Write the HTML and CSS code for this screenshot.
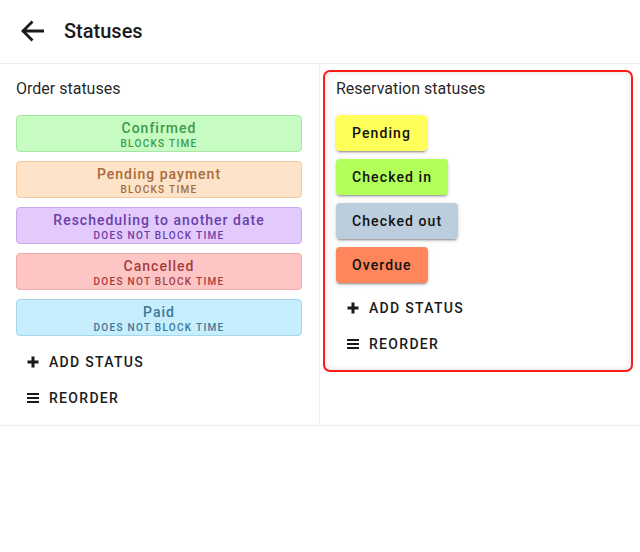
FILE: index.html
```html
<!DOCTYPE html>
<html>
<head>
<meta charset="utf-8">
<link rel="stylesheet" href="styles.css">
</head>
<body>
<header class="topbar">
  <button class="back" aria-label="Back">
    <svg width="24" height="22" viewBox="0 0 24 22"><path d="M23 11H3.5M11.5 2.5L3 11l8.5 8.5" fill="none" stroke="#1a1a1a" stroke-width="2.8" stroke-linecap="square" stroke-linejoin="miter"/></svg>
  </button>
  <h1 class="title">Statuses</h1>
</header>
<main class="columns">
  <section class="col col-left">
    <h2 class="col-title">Order statuses</h2>
    <div class="chips">
      <div class="chip chip-green"><div class="chip-name">Confirmed</div><div class="chip-sub">Blocks time</div></div>
      <div class="chip chip-orange"><div class="chip-name">Pending payment</div><div class="chip-sub">Blocks time</div></div>
      <div class="chip chip-purple"><div class="chip-name">Rescheduling to another date</div><div class="chip-sub">Does not block time</div></div>
      <div class="chip chip-red"><div class="chip-name">Cancelled</div><div class="chip-sub">Does not block time</div></div>
      <div class="chip chip-blue"><div class="chip-name">Paid</div><div class="chip-sub">Does not block time</div></div>
    </div>
    <div class="actions">
      <button class="action"><svg class="ico" viewBox="0 0 12 12"><path d="M6 0.5v11M0.5 6h11" stroke="#1a1a1a" stroke-width="3" fill="none"/></svg>Add status</button>
      <button class="action"><svg class="ico" viewBox="0 0 12 12"><path d="M0 2h12M0 6h12M0 10h12" stroke="#1a1a1a" stroke-width="2" fill="none"/></svg>Reorder</button>
    </div>
  </section>
  <section class="col col-right">
    <div class="card">
      <h2 class="col-title">Reservation statuses</h2>
      <div class="pills">
        <button class="pill pill-yellow">Pending</button>
        <button class="pill pill-lime">Checked in</button>
        <button class="pill pill-grey">Checked out</button>
        <button class="pill pill-coral">Overdue</button>
      </div>
      <div class="actions actions-right">
        <button class="action"><svg class="ico" viewBox="0 0 12 12"><path d="M6 0.5v11M0.5 6h11" stroke="#1a1a1a" stroke-width="3" fill="none"/></svg>Add status</button>
        <button class="action"><svg class="ico" viewBox="0 0 12 12"><path d="M0 2h12M0 6h12M0 10h12" stroke="#1a1a1a" stroke-width="2" fill="none"/></svg>Reorder</button>
      </div>
    </div>
  </section>
</main>
</body>
</html>
```
FILE: styles.css
```css
* { box-sizing: border-box; }
html, body { margin: 0; padding: 0; background: #fff; }
body {
  font-family: Roboto, "Liberation Sans", Arial, sans-serif;
  color: rgba(0,0,0,0.87);
  width: 640px;
}
button { font-family: inherit; border: 0; background: none; padding: 0; cursor: pointer; }

.topbar {
  height: 64px;
  display: flex;
  align-items: center;
  border-bottom: 1px solid #eeeeee;
}
.back {
  width: 24px;
  height: 22px;
  margin-left: 20px;
  margin-top: -2px;
  display: flex;
}
.title {
  margin: 0 0 0 20px;
  font-size: 20px;
  font-weight: 500;
  color: #1a1a1a;
  line-height: 24px;
  margin-top: -2px;
}

.columns {
  display: grid;
  grid-template-columns: 320px 320px;
  border-bottom: 1px solid #eeeeee;
}
.col-left {
  border-right: 1px solid #eeeeee;
  padding: 13px 17px 9px 16px;
}
.col-right {
  padding: 6px 7px 0 3px;
}
.col-title {
  margin: 0 0 14px;
  font-size: 16px;
  font-weight: 400;
  line-height: 24px;
  color: rgba(0,0,0,0.87);
}

.chips { display: flex; flex-direction: column; gap: 9px; }
.chip {
  height: 37px;
  border-radius: 4px;
  border: 1px solid;
  padding: 4px 8px 0;
  text-align: center;
}
.chip-name {
  font-size: 14px;
  font-weight: 500;
  line-height: 16px;
  letter-spacing: 1px;
}
.chip-sub {
  font-size: 10px;
  font-weight: 500;
  line-height: 12px;
  letter-spacing: 1.3px;
  text-transform: uppercase;
  margin-top: 1.5px;
}
.chip-green  { background: #c6fcc2; border-color: #a9e6a6; color: #40994a; }
.chip-orange { background: #fde3c8; border-color: #f2c9a3; color: #a86c3c; }
.chip-purple { background: #e3cafc; border-color: #c9a9ee; color: #6a40a8; }
.chip-red    { background: #fec5c5; border-color: #eea9a9; color: #a53d3d; }
.chip-blue   { background: #c6eefd; border-color: #a6d6ea; color: #3d7896; }

.actions { display: flex; flex-direction: column; margin-top: 8px; }
.action {
  height: 36px;
  display: flex;
  align-items: center;
  padding-left: 11px;
  gap: 10px;
  font-size: 14px;
  font-weight: 500;
  letter-spacing: 1.3px;
  text-transform: uppercase;
  color: #1a1a1a;
}
.ico { width: 12px; height: 12px; flex: none; }

.card {
  border: 2px solid #ff1a1a;
  border-radius: 7px;
  height: 302px;
  padding: 5px 11px 0;
  box-shadow: inset 0 0 6px rgba(0,0,0,0.12);
}
.pills { display: flex; flex-direction: column; align-items: flex-start; gap: 8px; }
.pill {
  height: 36px;
  padding: 0 16px;
  border-radius: 4px;
  font-size: 14px;
  font-weight: 500;
  letter-spacing: 1.1px;
  color: #111;
  box-shadow: 0 3px 1px -2px rgba(0,0,0,0.2), 0 2px 2px 0 rgba(0,0,0,0.14), 0 1px 5px 0 rgba(0,0,0,0.12);
}
.pill-yellow { background: #ffff5a; }
.pill-lime   { background: #b2ff59; }
.pill-grey   { background: #bccddd; }
.pill-coral  { background: #ff855b; }
.actions-right { margin-top: 7px; }
```
